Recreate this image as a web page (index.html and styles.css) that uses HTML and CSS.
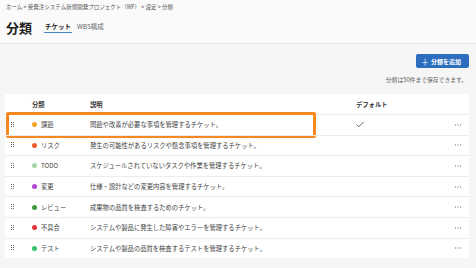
FILE: index.html
```html
<!DOCTYPE html>
<html lang="ja">
<head>
<meta charset="utf-8">
<title>分類</title>
<link rel="stylesheet" href="styles.css">
</head>
<body>
<div class="head">
  <div class="crumbs">ホーム &gt; 受発注システム新規開発プロジェクト（WF） &gt; 設定 &gt; 分類</div>
  <div class="titlebar">
    <h1 class="title">分類</h1>
    <div class="tabs">
      <span class="tab active">チケット</span>
      <span class="tab">WBS構成</span>
    </div>
  </div>
</div>

<div class="main">
  <div class="actions">
    <button class="add"><span class="plus">＋</span>分類を追加</button>
  </div>
  <div class="notice">分類は50件まで保存できます。</div>

  <div class="card">
    <div class="row hdr">
      <span class="c-grip"></span>
      <span class="c-name">分類</span>
      <span class="c-desc">説明</span>
      <span class="c-def">デフォルト</span>
      <span class="c-more"></span>
    </div>
    <div class="row first">
      <span class="c-grip"><svg class="grip" width="4" height="6" viewBox="0 0 4 6"><rect x="0" y="0" width="1" height="1"/><rect x="2" y="0" width="1" height="1"/><rect x="0" y="2" width="1" height="1"/><rect x="2" y="2" width="1" height="1"/><rect x="0" y="4" width="1" height="1"/><rect x="2" y="4" width="1" height="1"/></svg></span>
      <span class="c-name"><i class="dot" style="background:#f2a324"></i>課題</span>
      <span class="c-desc">問題や改善が必要な事項を管理するチケット。</span>
      <span class="c-def"><svg class="check" width="8" height="7" viewBox="0 0 8 7"><path d="M0.5 3.6 L2.8 5.8 L7.5 1" fill="none" stroke="#555" stroke-width="0.9"/></svg></span>
      <span class="c-more"><svg class="more" width="6" height="2" viewBox="0 0 6 2"><rect x="0" y="0.5" width="1" height="1"/><rect x="2.5" y="0.5" width="1" height="1"/><rect x="5" y="0.5" width="1" height="1"/></svg></span>
      <div class="mark"></div>
    </div>
    <div class="row">
      <span class="c-grip"><svg class="grip" width="4" height="6" viewBox="0 0 4 6"><rect x="0" y="0" width="1" height="1"/><rect x="2" y="0" width="1" height="1"/><rect x="0" y="2" width="1" height="1"/><rect x="2" y="2" width="1" height="1"/><rect x="0" y="4" width="1" height="1"/><rect x="2" y="4" width="1" height="1"/></svg></span>
      <span class="c-name"><i class="dot" style="background:#f2592a"></i>リスク</span>
      <span class="c-desc">発生の可能性があるリスクや懸念事項を管理するチケット。</span>
      <span class="c-def"></span>
      <span class="c-more"><svg class="more" width="6" height="2" viewBox="0 0 6 2"><rect x="0" y="0.5" width="1" height="1"/><rect x="2.5" y="0.5" width="1" height="1"/><rect x="5" y="0.5" width="1" height="1"/></svg></span>
    </div>
    <div class="row">
      <span class="c-grip"><svg class="grip" width="4" height="6" viewBox="0 0 4 6"><rect x="0" y="0" width="1" height="1"/><rect x="2" y="0" width="1" height="1"/><rect x="0" y="2" width="1" height="1"/><rect x="2" y="2" width="1" height="1"/><rect x="0" y="4" width="1" height="1"/><rect x="2" y="4" width="1" height="1"/></svg></span>
      <span class="c-name"><i class="dot" style="background:#9fd6a4"></i>TODO</span>
      <span class="c-desc">スケジュールされていないタスクや作業を管理するチケット。</span>
      <span class="c-def"></span>
      <span class="c-more"><svg class="more" width="6" height="2" viewBox="0 0 6 2"><rect x="0" y="0.5" width="1" height="1"/><rect x="2.5" y="0.5" width="1" height="1"/><rect x="5" y="0.5" width="1" height="1"/></svg></span>
    </div>
    <div class="row">
      <span class="c-grip"><svg class="grip" width="4" height="6" viewBox="0 0 4 6"><rect x="0" y="0" width="1" height="1"/><rect x="2" y="0" width="1" height="1"/><rect x="0" y="2" width="1" height="1"/><rect x="2" y="2" width="1" height="1"/><rect x="0" y="4" width="1" height="1"/><rect x="2" y="4" width="1" height="1"/></svg></span>
      <span class="c-name"><i class="dot" style="background:#b246cf"></i>変更</span>
      <span class="c-desc">仕様・設計などの変更内容を管理するチケット。</span>
      <span class="c-def"></span>
      <span class="c-more"><svg class="more" width="6" height="2" viewBox="0 0 6 2"><rect x="0" y="0.5" width="1" height="1"/><rect x="2.5" y="0.5" width="1" height="1"/><rect x="5" y="0.5" width="1" height="1"/></svg></span>
    </div>
    <div class="row">
      <span class="c-grip"><svg class="grip" width="4" height="6" viewBox="0 0 4 6"><rect x="0" y="0" width="1" height="1"/><rect x="2" y="0" width="1" height="1"/><rect x="0" y="2" width="1" height="1"/><rect x="2" y="2" width="1" height="1"/><rect x="0" y="4" width="1" height="1"/><rect x="2" y="4" width="1" height="1"/></svg></span>
      <span class="c-name"><i class="dot" style="background:#3f9a3a"></i>レビュー</span>
      <span class="c-desc">成果物の品質を検査するためのチケット。</span>
      <span class="c-def"></span>
      <span class="c-more"><svg class="more" width="6" height="2" viewBox="0 0 6 2"><rect x="0" y="0.5" width="1" height="1"/><rect x="2.5" y="0.5" width="1" height="1"/><rect x="5" y="0.5" width="1" height="1"/></svg></span>
    </div>
    <div class="row">
      <span class="c-grip"><svg class="grip" width="4" height="6" viewBox="0 0 4 6"><rect x="0" y="0" width="1" height="1"/><rect x="2" y="0" width="1" height="1"/><rect x="0" y="2" width="1" height="1"/><rect x="2" y="2" width="1" height="1"/><rect x="0" y="4" width="1" height="1"/><rect x="2" y="4" width="1" height="1"/></svg></span>
      <span class="c-name"><i class="dot" style="background:#e2353a"></i>不具合</span>
      <span class="c-desc">システムや製品に発生した障害やエラーを管理するチケット。</span>
      <span class="c-def"></span>
      <span class="c-more"><svg class="more" width="6" height="2" viewBox="0 0 6 2"><rect x="0" y="0.5" width="1" height="1"/><rect x="2.5" y="0.5" width="1" height="1"/><rect x="5" y="0.5" width="1" height="1"/></svg></span>
    </div>
    <div class="row last">
      <span class="c-grip"><svg class="grip" width="4" height="6" viewBox="0 0 4 6"><rect x="0" y="0" width="1" height="1"/><rect x="2" y="0" width="1" height="1"/><rect x="0" y="2" width="1" height="1"/><rect x="2" y="2" width="1" height="1"/><rect x="0" y="4" width="1" height="1"/><rect x="2" y="4" width="1" height="1"/></svg></span>
      <span class="c-name"><i class="dot" style="background:#34c36a"></i>テスト</span>
      <span class="c-desc">システムや製品の品質を検査するテストを管理するチケット。</span>
      <span class="c-def"></span>
      <span class="c-more"><svg class="more" width="6" height="2" viewBox="0 0 6 2"><rect x="0" y="0.5" width="1" height="1"/><rect x="2.5" y="0.5" width="1" height="1"/><rect x="5" y="0.5" width="1" height="1"/></svg></span>
    </div>
  </div>
</div>
</body>
</html>
```

FILE: styles.css
```css
/* Classification settings page */

body
{ margin: 0;
background-color: #f6f6f6;
font-family: "Noto Sans CJK JP", "Noto Sans", sans-serif;
color: #333;
}

div.head
{ height: 40px;
background-color: #fafafa;
border-bottom: 1px solid #e6e6e6;
padding: 3px 6px 0;
box-sizing: content-box;
}

div.crumbs
{ font-size: 5.5px;
line-height: 8px;
color: #555;
}

div.titlebar
{ display: flex;
align-items: center;
margin-top: 8px;
height: 17px;
}

h1.title
{ margin: 0;
font-size: 13px;
font-weight: bold;
color: #222;
}

div.tabs
{ display: flex;
gap: 4px;
margin-left: 12px;
}

span.tab
{ font-size: 6.5px;
line-height: 9px;
color: #666;
padding: 0 1px 1px;
border-bottom: 1px solid transparent;
}

span.tab.active
{ color: #222;
font-weight: bold;
border-bottom-color: #4a86c8;
}

div.main
{ padding: 10px 7px 0 5px;
}

div.actions
{ display: flex;
justify-content: flex-end;
}

button.add
{ display: flex;
align-items: center;
height: 14px;
width: 53px;
padding: 0 0 0 5px;
border: none;
border-radius: 2px;
background-color: #2c6ebd;
color: #fff;
font-family: inherit;
font-size: 6px;
font-weight: bold;
}

span.plus
{ font-size: 8px;
font-weight: normal;
margin-right: 2px;
}

div.notice
{ text-align: right;
font-size: 5.8px;
line-height: 8px;
color: #666;
margin-top: 8px;
padding-right: 2px;
}

div.card
{ margin-top: 10px;
background-color: #fff;
}

div.row
{ position: relative;
display: flex;
align-items: center;
height: 20.6px;
border-top: 1px solid #ececec;
box-sizing: border-box;
font-size: 6.3px;
color: #444;
}

div.row.hdr
{ height: 20px;
border-top: none;
font-weight: bold;
color: #333;
}

span.c-grip
{ width: 27px;
padding-left: 6px;
box-sizing: border-box;
display: flex;
align-items: center;
}

svg.grip
{ fill: #666;
}

span.c-name
{ width: 58px;
display: flex;
align-items: center;
}

span.c-desc
{ flex: 1;
}

span.c-def
{ width: 97px;
display: flex;
align-items: center;
}

span.c-more
{ width: 16px;
display: flex;
align-items: center;
padding-left: 2px;
box-sizing: border-box;
}

svg.more
{ fill: #666;
}

i.dot
{ display: inline-block;
width: 5px;
height: 5px;
border-radius: 50%;
margin-right: 4px;
}

div.mark
{ position: absolute;
left: 1px;
top: -3px;
width: 310px;
height: 26px;
border: 3px solid #f7881f;
border-radius: 2px;
box-sizing: border-box;
}
```
